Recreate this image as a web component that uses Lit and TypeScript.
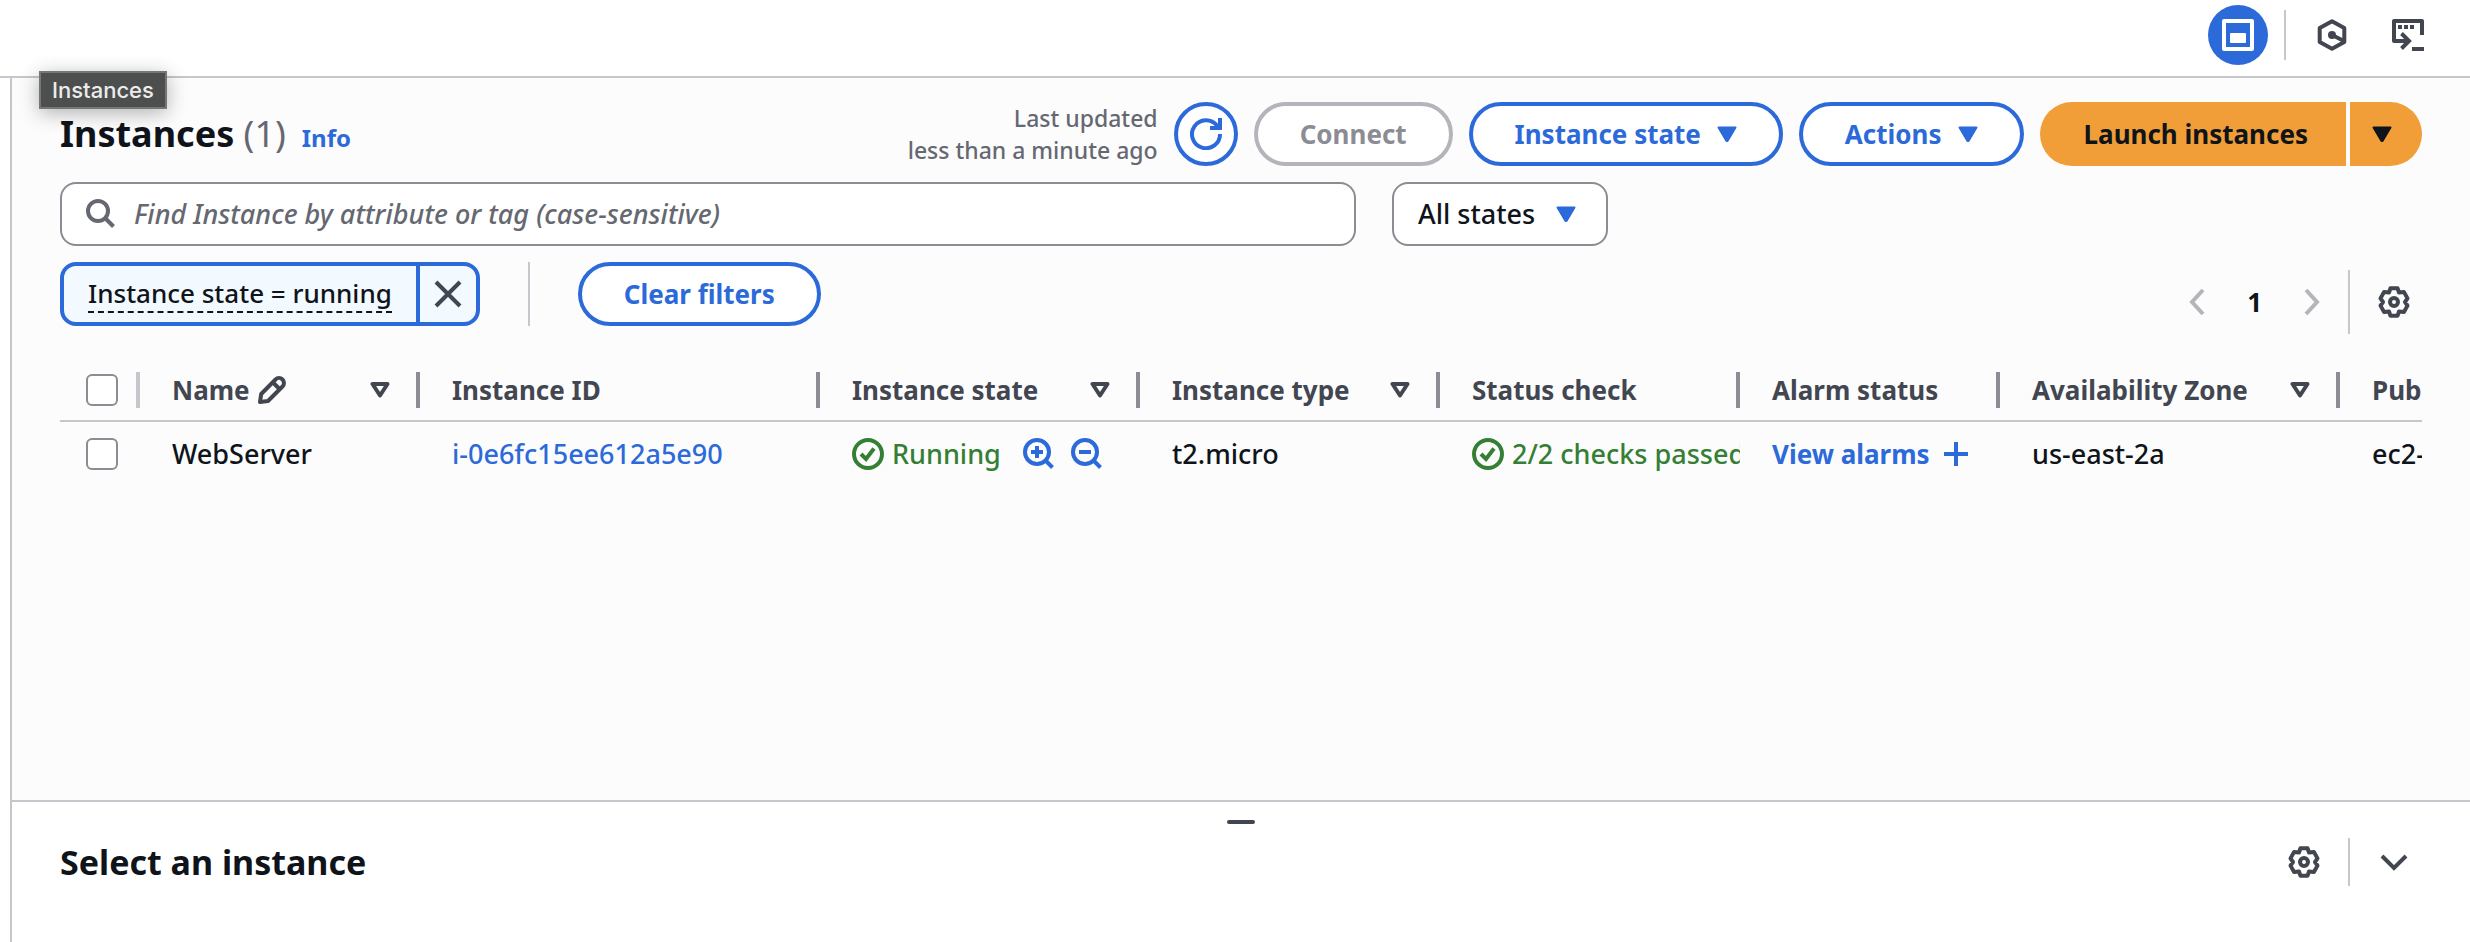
import { LitElement, html, css, svg } from "lit";
import { customElement } from "lit/decorators.js";

const icon = (w: number, h: number, body: unknown) =>
  html`<svg class="icon" width=${w} height=${h} viewBox="0 0 ${w} ${h}" fill="none" stroke="currentColor" stroke-width="4" aria-hidden="true">${body}</svg>`;

const icons = {
  splitPanel: icon(32, 32, svg`<rect x="2" y="2" width="28" height="28" stroke-linejoin="round"/><rect x="8" y="14" width="16" height="10" rx="1" fill="currentColor" stroke="none"/>`),
  hexagon: icon(32, 32, svg`<path d="M16 2.3 28.3 9v14L16 29.7 3.7 23V9z" stroke-linejoin="round"/><circle cx="16" cy="16" r="4" fill="currentColor" stroke="none"/><path d="M16 16l12 6"/>`),
  shell: icon(32, 32, svg`<path d="M14 22H2V2h28v14" stroke-linejoin="round"/><path d="M6 8h4m2 0h4m2 0h4M10 22h7M9.5 14.500l7.500 7.500-7.500 7.500M20 30h12"/>`),
  refresh: icon(32, 32, svg`<path d="M30 16A14 14 0 1 1 27 7.500L30 10M30 0v10H20"/>`),
  caret: icon(20, 16, svg`<path d="M1.500 1.500h17L10.500 15h-1z" fill="currentColor" stroke-width="2" stroke-linejoin="round"/>`),
  sort: icon(20, 16, svg`<path d="M2.500 2h15L10 13.500z" stroke-linejoin="round"/>`),
  search: icon(30, 30, svg`<circle cx="12" cy="12" r="10"/><path d="M18.500 18.500l9 9"/>`),
  close: icon(28, 28, svg`<path d="M2 2l24 24M26 2L2 26"/>`),
  left: icon(16, 28, svg`<path d="M14 2L3 14l11 12"/>`),
  right: icon(16, 28, svg`<path d="M2 2l11 12L2 26"/>`),
  down: icon(28, 18, svg`<path d="M2 3l12 12L26 3"/>`),
  gear: icon(32, 32, svg`<path stroke-linejoin="round" d="M12.400 2.300h7.200l1.400 4.200 4.900-.6 3.600 6.500L27 16l2.500 3.600-3.600 6.500-4.900-.6-1.400 4.200h-7.200L11 25.500l-4.900.6-3.600-6.500L5 16l-2.500-3.600 3.600-6.500 4.900.6z"/><circle cx="16" cy="16" r="4"/>`),
  pencil: icon(28, 28, svg`<path stroke-linejoin="round" d="M2 26l1.200-8L17.500 3.500a4.600 4.600 0 0 1 7 7L10 25z"/><path d="M15 6.500l6.500 6.500"/>`),
  ok: icon(32, 32, svg`<circle cx="16" cy="16" r="14"/><path d="M9 16l5 5 8-10.500"/>`),
  zoomIn: icon(32, 32, svg`<circle cx="14" cy="14" r="12"/><path d="M8 14h12M14 8v12M22.500 22.500l7 7"/>`),
  zoomOut: icon(32, 32, svg`<circle cx="14" cy="14" r="12"/><path d="M8 14h12M22.500 22.500l7 7"/>`),
  plus: icon(24, 24, svg`<path d="M12 0v24M0 12h24"/>`),
};

const columns = [
  { key: "name", label: "Name", sortable: true, editable: true },
  { key: "id", label: "Instance ID", sortable: false },
  { key: "state", label: "Instance state", sortable: true },
  { key: "type", label: "Instance type", sortable: true },
  { key: "check", label: "Status check", sortable: false },
  { key: "alarm", label: "Alarm status", sortable: false },
  { key: "zone", label: "Availability Zone", sortable: true },
  { key: "dns", label: "Public IPv4 DNS", sortable: false },
];

@customElement("app-root")
export class AppRoot extends LitElement {
  static styles = css`
    :host {
      --blue: #2c6ada;
      --ink: #0f141a;
      --dark: #424650;
      --line: #c6c6cd;
      --muted: #656871;
      display: flex;
      flex-direction: column;
      min-height: 100vh;
      position: relative;
      background: #fff;
      color: var(--ink);
      font: 500 27px/40px "Noto Sans", "Open Sans", sans-serif;
    }
    * { box-sizing: border-box; }
    h1, h2 { margin: 0; font-size: 34px; line-height: 48px; font-weight: 700; }
    h1 { font-size: 36px; }
    button, select, input { font: inherit; color: inherit; margin: 0; }
    button { padding: 0; border: 0; background: none; display: flex; align-items: center; justify-content: center; cursor: pointer; }
    a { color: var(--blue); text-decoration: none; }
    .icon { display: block; flex: none; }
    .rule { width: 2px; background: var(--line); align-self: stretch; }

    .tools { display: flex; justify-content: flex-end; align-items: center; height: 78px; padding: 0 46px 6px 0; border-bottom: 2px solid var(--line); color: var(--dark); }
    .tools .rule { margin: 10px 30px 10px 16px; }
    .tools .round { width: 60px; height: 60px; border-radius: 50%; background: var(--blue); color: #fff; }
    .tools .plain { margin-right: 44px; }

    .tip { position: absolute; left: 39px; top: 71px; height: 38px; padding: 0 11px; border: 2px solid #757676; background: #4d4f4f; color: #ececec; font: 500 22px/34px Inter, sans-serif; box-shadow: 0 4px 20px rgba(0, 0, 0, 0.3); }

    .frame { flex: 1; display: flex; flex-direction: column; margin-left: 10px; border-left: 2px solid var(--line); min-width: 0; }
    .list { flex: 1; padding: 24px 48px; background: #fcfcfd; min-width: 0; }
    .bar { display: flex; align-items: center; gap: 16px; margin-bottom: 16px; }
    .title { display: flex; align-items: baseline; gap: 16px; margin-right: auto; }
    .count { font-weight: 400; color: var(--muted); }
    .info { font-size: 24px; font-weight: 700; }
    .updated { font-size: 23px; line-height: 32px; color: var(--muted); text-align: right; }

    .btn { height: 64px; padding: 0 42px; border: 4px solid var(--blue); border-radius: 32px; background: #fff; color: var(--blue); font-size: 26px; font-weight: 700; white-space: nowrap; gap: 16px; }
    .btn.circle { width: 64px; padding: 0; }
    .btn:disabled { border-color: #b4b4bb; color: #8c8c94; cursor: default; }
    .split { display: flex; gap: 4px; background: linear-gradient(#fff, #fff) center / 50% 100% no-repeat; }
    .split .btn { border: 0; background: #f29e38; color: var(--ink); }
    .split .main { padding: 0 38px 0 44px; border-radius: 32px 0 0 32px; }
    .split .more { width: 72px; padding: 0 8px 0 0; border-radius: 0 32px 32px 0; }

    .search { flex: 0 1 1296px; display: flex; align-items: center; gap: 18px; height: 64px; padding: 0 24px; border: 2px solid #8c8c94; border-radius: 16px; background: #fff; color: var(--muted); }
    .search input { flex: 1; min-width: 0; border: 0; outline: 0; padding: 0; background: none; color: var(--ink); }
    .search input::placeholder { color: var(--muted); opacity: 1; font-style: italic; }
    .states { position: relative; margin-left: 20px; color: var(--blue); }
    .states select { appearance: none; width: 216px; height: 64px; padding: 0 56px 0 24px; border: 2px solid #8c8c94; border-radius: 16px; background: #fff; color: var(--ink); }
    .states .icon { position: absolute; right: 32px; top: 24px; pointer-events: none; }

    .filters { display: flex; align-items: flex-start; }
    .token { display: flex; height: 64px; border: 4px solid var(--blue); border-radius: 16px; background: #f2faff; }
    .token .text { padding: 0 24px; font-size: 26px; }
    .token .text span { line-height: 36px; border-bottom: 2px dashed var(--ink); }
    .token .x { width: 60px; border-left: 4px solid var(--blue); color: var(--dark); }
    .filters .rule.mid { height: 64px; align-self: flex-start; margin: 0 48px; }
    .pages { display: flex; align-items: center; gap: 42px; height: 64px; margin: 8px 12px 0 auto; font-size: 26px; font-weight: 700; }
    .pages .nav { color: #b4b4bb; }
    .pages .rule { margin: 0 -14px; }
    .pages .cog { color: var(--dark); }

    .scroll { margin-top: 38px; overflow-x: auto; scrollbar-width: none; }
    table { table-layout: fixed; width: 2720px; border-collapse: separate; border-spacing: 0; }
    .c-sel { width: 80px; }
    .c-name { width: 280px; }
    .c-id { width: 400px; }
    .c-state { width: 320px; }
    .c-type, .c-check { width: 300px; }
    .c-alarm { width: 260px; }
    .c-zone { width: 340px; }
    .c-dns { width: 440px; }
    th { padding: 0 0 12px; border-bottom: 2px solid var(--line); font-size: 26px; font-weight: 700; color: var(--dark); text-align: left; white-space: nowrap; }
    .head { display: flex; align-items: center; gap: 8px; height: 36px; padding: 0 26px 0 32px; border-right: 4px solid #8c8c94; }
    .head .order { margin-left: auto; }
    .head.pick, .cell.pick { padding: 0 0 0 26px; }
    .head.pick { border-color: var(--line); }
    td { padding: 0; overflow: hidden; }
    .cell { display: flex; align-items: center; gap: 8px; height: 64px; padding-left: 32px; white-space: nowrap; }
    .green { color: #357f35; }
    .zoom { color: var(--blue); margin-left: 14px; }
    .zoom + .zoom { margin-left: 8px; }
    .alarm { font-size: 26px; font-weight: 700; color: var(--blue); }
    button.alarm { margin-left: 6px; }
    input[type="checkbox"] { appearance: none; display: block; flex: none; width: 32px; height: 32px; border: 2px solid #8c8c94; border-radius: 6px; background: #fff; }
    input[type="checkbox"]:checked { background: var(--blue); border-color: var(--blue); }

    .panel { padding: 18px 48px 56px; border-top: 2px solid var(--line); background: #fff; }
    .grip { width: 28px; height: 4px; margin: 0 auto 14px; border-radius: 2px; background: var(--dark); }
    .foot { display: flex; align-items: center; color: var(--dark); }
    .foot h2 { margin-right: auto; color: var(--ink); }
    .foot .rule { margin: 0 30px 0 28px; }
    .foot .fold { margin-right: 14px; }
  `;

  private cell(key: string) {
    switch (key) {
      case "name": return html`<div class="cell">WebServer</div>`;
      case "id": return html`<div class="cell"><a href="#">i-0e6fc15ee612a5e90</a></div>`;
      case "state": return html`<div class="cell"><span class="green">${icons.ok}</span><span class="green">Running</span>
        <button class="zoom" aria-label="Show only this state">${icons.zoomIn}</button><button class="zoom" aria-label="Exclude this state">${icons.zoomOut}</button></div>`;
      case "type": return html`<div class="cell">t2.micro</div>`;
      case "check": return html`<div class="cell green">${icons.ok}<span>2/2 checks passed</span></div>`;
      case "alarm": return html`<div class="cell"><a href="#" class="alarm">View alarms</a><button class="alarm" aria-label="Add alarm">${icons.plus}</button></div>`;
      case "zone": return html`<div class="cell">us-east-2a</div>`;
      default: return html`<div class="cell">ec2-</div>`;
    }
  }

  render() {
    return html`
      <header class="tools">
        <button class="round" aria-label="Split panel">${icons.splitPanel}</button>
        <span class="rule"></span>
        <button class="plain" aria-label="Amazon Q">${icons.hexagon}</button>
        <button aria-label="CloudShell">${icons.shell}</button>
      </header>
      <div class="frame">
        <main class="list">
          <div class="bar">
            <div class="title">
              <h1>Instances <span class="count">(1)</span></h1>
              <a href="#" class="info">Info</a>
            </div>
            <div class="updated">Last updated<br />less than a minute ago</div>
            <button class="btn circle" aria-label="Refresh">${icons.refresh}</button>
            <button class="btn" disabled>Connect</button>
            <button class="btn">Instance state ${icons.caret}</button>
            <button class="btn">Actions ${icons.caret}</button>
            <div class="split">
              <button class="btn main">Launch instances</button>
              <button class="btn more" aria-label="More launch options">${icons.caret}</button>
            </div>
          </div>
          <div class="bar">
            <label class="search">${icons.search}<input type="text" aria-label="Find Instance" placeholder="Find Instance by attribute or tag (case-sensitive)" /></label>
            <label class="states"><select aria-label="States"><option>All states</option></select>${icons.caret}</label>
          </div>
          <div class="filters">
            <div class="token">
              <button class="text"><span>Instance state = running</span></button>
              <button class="x" aria-label="Remove filter">${icons.close}</button>
            </div>
            <span class="rule mid"></span>
            <button class="btn">Clear filters</button>
            <nav class="pages" aria-label="Pages">
              <button class="nav" aria-label="Previous page">${icons.left}</button>
              <button>1</button>
              <button class="nav" aria-label="Next page">${icons.right}</button>
              <span class="rule"></span>
              <button class="cog" aria-label="Preferences">${icons.gear}</button>
            </nav>
          </div>
          <div class="scroll">
            <table>
              <colgroup><col class="c-sel" />${columns.map((c) => html`<col class="c-${c.key}" />`)}</colgroup>
              <thead><tr>
                <th><div class="head pick"><input type="checkbox" aria-label="Select all" /></div></th>
                ${columns.map((c) => html`<th scope="col"><div class="head"><span>${c.label}</span>${c.editable ? icons.pencil : ""}${c.sortable ? html`<button class="order" aria-label="Sort by ${c.label}">${icons.sort}</button>` : ""}</div></th>`)}
              </tr></thead>
              <tbody><tr>
                <td><div class="cell pick"><input type="checkbox" aria-label="Select WebServer" /></div></td>
                ${columns.map((c) => html`<td>${this.cell(c.key)}</td>`)}
              </tr></tbody>
            </table>
          </div>
        </main>
        <section class="panel">
          <div class="grip"></div>
          <div class="foot">
            <h2>Select an instance</h2>
            <button aria-label="Panel preferences">${icons.gear}</button>
            <span class="rule"></span>
            <button class="fold" aria-label="Collapse panel">${icons.down}</button>
          </div>
        </section>
      </div>
      <div class="tip" role="tooltip">Instances</div>
    `;
  }
}
